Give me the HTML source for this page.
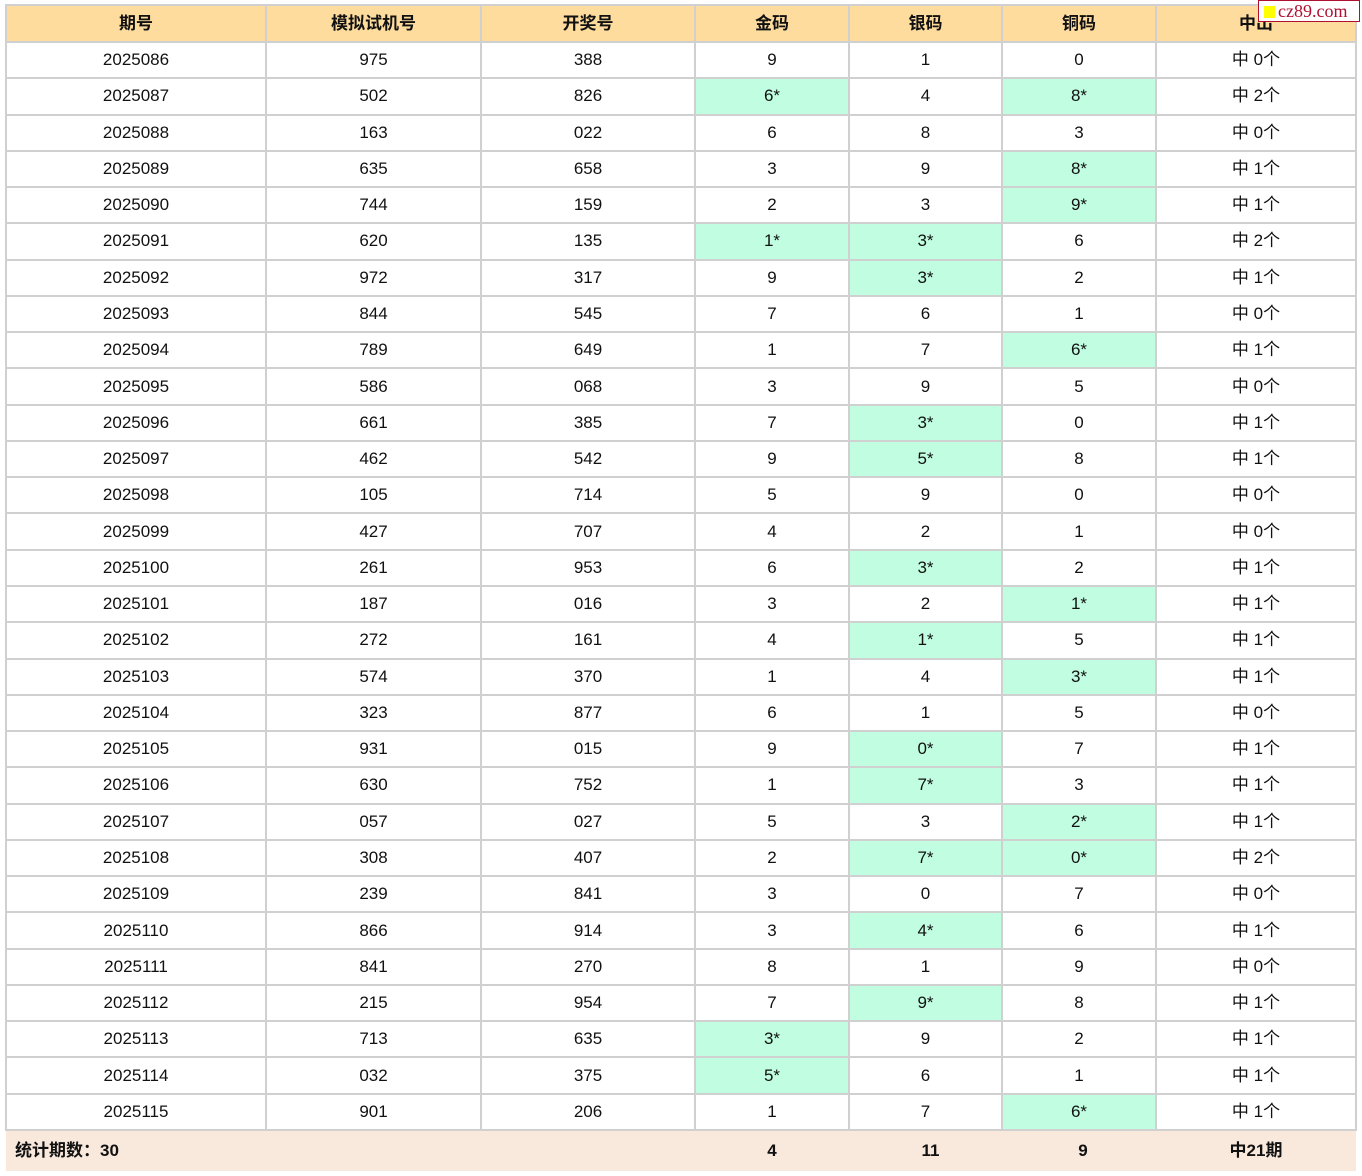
<!DOCTYPE html>
<html><head><meta charset="utf-8"><style>
body{margin:0;background:#fff;width:1362px;height:1176px;overflow:hidden;position:relative;font-family:"Liberation Sans","Noto Sans CJK SC",sans-serif;}
table{position:absolute;left:5px;top:4px;border-collapse:collapse;table-layout:fixed;width:1350px;font-size:17px;color:#111;}
td,th{border:2px solid #d0d0d0;text-align:center;padding:0;line-height:20px;}
tr{height:36.27px;}
tr.h{height:37px;}
th{background:#fddc9e;font-weight:bold;}
.g{background:#c1fde0;}
tr.f{height:41px;}
tr.f td{background:#f9e8dc;border:none;font-weight:bold;}
.logo{position:absolute;left:1258px;top:0;width:100px;height:20px;background:#fff;border:1px solid #b01030;font-family:"Liberation Serif",serif;color:#b01030;font-size:18px;line-height:20px;}
.logo i{display:inline-block;width:11px;height:12px;background:#ff0;margin:0 3px 0 5px;vertical-align:-1px;}
</style></head><body>
<table>
<colgroup><col style="width:260px"><col style="width:215px"><col style="width:214px"><col style="width:154px"><col style="width:153px"><col style="width:154px"><col style="width:200px"></colgroup>
<tr class="h"><th>期号</th><th>模拟试机号</th><th>开奖号</th><th>金码</th><th>银码</th><th>铜码</th><th>中出</th></tr>
<tr><td>2025086</td><td>975</td><td>388</td><td>9</td><td>1</td><td>0</td><td>中 0个</td></tr>
<tr><td>2025087</td><td>502</td><td>826</td><td class="g">6*</td><td>4</td><td class="g">8*</td><td>中 2个</td></tr>
<tr><td>2025088</td><td>163</td><td>022</td><td>6</td><td>8</td><td>3</td><td>中 0个</td></tr>
<tr><td>2025089</td><td>635</td><td>658</td><td>3</td><td>9</td><td class="g">8*</td><td>中 1个</td></tr>
<tr><td>2025090</td><td>744</td><td>159</td><td>2</td><td>3</td><td class="g">9*</td><td>中 1个</td></tr>
<tr><td>2025091</td><td>620</td><td>135</td><td class="g">1*</td><td class="g">3*</td><td>6</td><td>中 2个</td></tr>
<tr><td>2025092</td><td>972</td><td>317</td><td>9</td><td class="g">3*</td><td>2</td><td>中 1个</td></tr>
<tr><td>2025093</td><td>844</td><td>545</td><td>7</td><td>6</td><td>1</td><td>中 0个</td></tr>
<tr><td>2025094</td><td>789</td><td>649</td><td>1</td><td>7</td><td class="g">6*</td><td>中 1个</td></tr>
<tr><td>2025095</td><td>586</td><td>068</td><td>3</td><td>9</td><td>5</td><td>中 0个</td></tr>
<tr><td>2025096</td><td>661</td><td>385</td><td>7</td><td class="g">3*</td><td>0</td><td>中 1个</td></tr>
<tr><td>2025097</td><td>462</td><td>542</td><td>9</td><td class="g">5*</td><td>8</td><td>中 1个</td></tr>
<tr><td>2025098</td><td>105</td><td>714</td><td>5</td><td>9</td><td>0</td><td>中 0个</td></tr>
<tr><td>2025099</td><td>427</td><td>707</td><td>4</td><td>2</td><td>1</td><td>中 0个</td></tr>
<tr><td>2025100</td><td>261</td><td>953</td><td>6</td><td class="g">3*</td><td>2</td><td>中 1个</td></tr>
<tr><td>2025101</td><td>187</td><td>016</td><td>3</td><td>2</td><td class="g">1*</td><td>中 1个</td></tr>
<tr><td>2025102</td><td>272</td><td>161</td><td>4</td><td class="g">1*</td><td>5</td><td>中 1个</td></tr>
<tr><td>2025103</td><td>574</td><td>370</td><td>1</td><td>4</td><td class="g">3*</td><td>中 1个</td></tr>
<tr><td>2025104</td><td>323</td><td>877</td><td>6</td><td>1</td><td>5</td><td>中 0个</td></tr>
<tr><td>2025105</td><td>931</td><td>015</td><td>9</td><td class="g">0*</td><td>7</td><td>中 1个</td></tr>
<tr><td>2025106</td><td>630</td><td>752</td><td>1</td><td class="g">7*</td><td>3</td><td>中 1个</td></tr>
<tr><td>2025107</td><td>057</td><td>027</td><td>5</td><td>3</td><td class="g">2*</td><td>中 1个</td></tr>
<tr><td>2025108</td><td>308</td><td>407</td><td>2</td><td class="g">7*</td><td class="g">0*</td><td>中 2个</td></tr>
<tr><td>2025109</td><td>239</td><td>841</td><td>3</td><td>0</td><td>7</td><td>中 0个</td></tr>
<tr><td>2025110</td><td>866</td><td>914</td><td>3</td><td class="g">4*</td><td>6</td><td>中 1个</td></tr>
<tr><td>2025111</td><td>841</td><td>270</td><td>8</td><td>1</td><td>9</td><td>中 0个</td></tr>
<tr><td>2025112</td><td>215</td><td>954</td><td>7</td><td class="g">9*</td><td>8</td><td>中 1个</td></tr>
<tr><td>2025113</td><td>713</td><td>635</td><td class="g">3*</td><td>9</td><td>2</td><td>中 1个</td></tr>
<tr><td>2025114</td><td>032</td><td>375</td><td class="g">5*</td><td>6</td><td>1</td><td>中 1个</td></tr>
<tr><td>2025115</td><td>901</td><td>206</td><td>1</td><td>7</td><td class="g">6*</td><td>中 1个</td></tr>
<tr class="f"><td colspan="3" style="text-align:left;padding-left:9px">统计期数：30</td><td>4</td><td style="padding-left:10px">11</td><td style="padding-left:8px">9</td><td>中21期</td></tr>
</table>
<div class="logo"><i></i>cz89.com</div>
</body></html>
